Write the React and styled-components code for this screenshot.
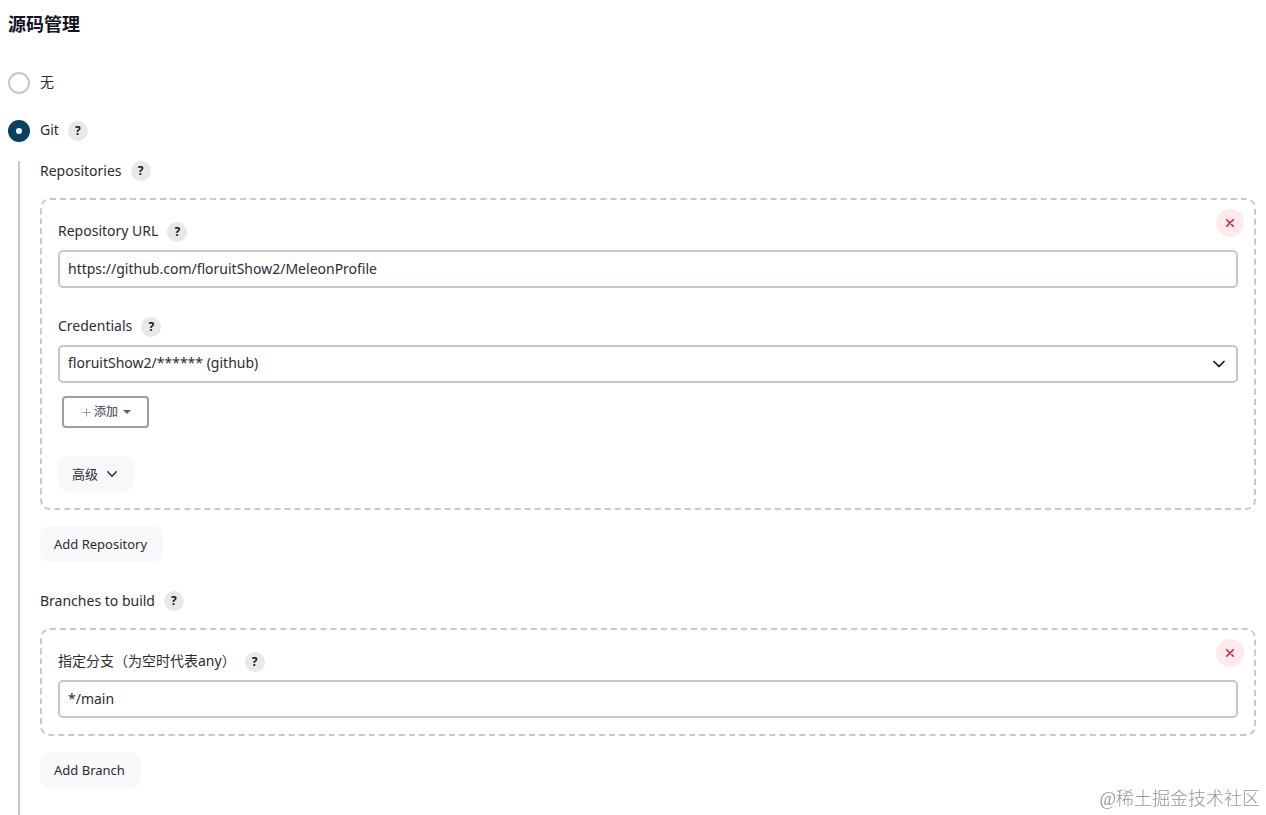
import React, { useState } from 'react';
import styled, { createGlobalStyle } from 'styled-components';

const GlobalStyle = createGlobalStyle`
  *,
  *::before,
  *::after {
    box-sizing: border-box;
  }

  body {
    margin: 0;
    background: #fff;
    color: #2c2c34;
    font-family: 'Noto Sans', 'Noto Sans CJK SC', sans-serif;
    font-size: 14px;
    line-height: 20px;
  }

  button,
  input,
  select {
    margin: 0;
    color: inherit;
    font: inherit;
  }
`;

const Page = styled.main`
  display: flex;
  flex-direction: column;
  min-height: 100vh;
  padding: 12px 10px 0 8px;
`;

const Title = styled.h1`
  margin: 0 0 36px;
  color: #14141f;
  font-size: 18px;
  font-weight: 700;
  line-height: 24px;
`;

const RadioRow = styled.div`
  display: flex;
  align-items: center;
  height: 22px;

  & + & {
    margin-top: 26px;
  }
`;

const Radio = styled.input`
  appearance: none;
  width: 22px;
  height: 22px;
  border: 2px solid #c3c8ca;
  border-radius: 50%;
  background: #fff;

  &:checked {
    border: 8px solid #0b4060;
  }
`;

const RadioLabel = styled.label`
  padding: 0 9px 2px 10px;
`;

const Nested = styled.div`
  flex: 1;
  margin: 19px 0 0 10px;
  padding: 0 0 24px 20px;
  border-left: 2px solid #c3c8ca;
`;

const LabelRow = styled.div`
  display: flex;
  align-items: center;
  gap: 9px;
  height: 20px;
`;

const Caption = styled.span`
  line-height: 20px;
`;

const FieldCaption = styled.label`
  padding-bottom: 2px;
`;

const HelpButton = styled.button`
  width: 20px;
  height: 20px;
  padding: 0;
  border: 0;
  border-radius: 50%;
  background: #e8e8e8;
  color: #14141f;
  font-size: 12px;
  font-weight: 700;
  line-height: 20px;
`;

const Panel = styled.section`
  position: relative;
  margin: 17px 0 16px;
  padding: 22px 16px 16px;
  border: 2px dashed #c6c8c9;
  border-radius: 10px;
`;

const Field = styled.div`
  & + & {
    margin-top: 29px;
  }
`;

const control = `
  display: block;
  width: 100%;
  height: 38px;
  margin-top: 8px;
  padding: 0 8px 2px;
  border: 2px solid #c3c8ca;
  border-radius: 5px;
  background: #fff;
`;

const TextInput = styled.input`
  ${control}
`;

const SelectBox = styled.div`
  position: relative;
  color: #14141f;

  svg {
    position: absolute;
    top: 12px;
    right: 12px;
    pointer-events: none;
  }
`;

const Select = styled.select`
  ${control}
  appearance: none;
  color: #2c2c34;
`;

const RemoveButton = styled.button`
  position: absolute;
  top: 9px;
  right: 10px;
  display: flex;
  align-items: center;
  justify-content: center;
  width: 28px;
  height: 28px;
  padding: 0;
  border: 0;
  border-radius: 50%;
  background: #fdeaec;
  color: #d0103a;
`;

const AddButton = styled.button`
  display: flex;
  align-items: center;
  gap: 3px;
  height: 32px;
  margin: 13px 0 28px 4px;
  padding: 0 14px 0 18px;
  border: 2px solid #9a9fa3;
  border-radius: 4px;
  background: #fff;
  color: #5c6068;
  font-size: 12px;
  font-weight: 500;
`;

const SoftButton = styled.button`
  display: flex;
  align-items: center;
  gap: 8px;
  height: 36px;
  padding: 0 16px 0 14px;
  border: 0;
  border-radius: 10px;
  background: #f8f8fa;
  font-size: 13px;
`;

const Group = styled.div`
  & + & {
    margin-top: 29px;
  }
`;

const Watermark = styled.div`
  position: fixed;
  right: 6px;
  bottom: 4px;
  color: #949494;
  font-family: 'Liberation Serif', 'Noto Sans CJK SC', serif;
  font-size: 18px;
  font-weight: 300;
  line-height: 24px;
`;

function Chevron({ size }) {
  return (
    <svg width={size} height={size} viewBox="0 0 14 14" fill="none" aria-hidden="true">
      <path
        d="M2 4.5 7 9.5 12 4.5"
        stroke="currentColor"
        strokeWidth="1.7"
        strokeLinecap="round"
        strokeLinejoin="round"
      />
    </svg>
  );
}

function Help({ topic }) {
  return (
    <HelpButton type="button" aria-label={`Help: ${topic}`}>
      ?
    </HelpButton>
  );
}

function Remove() {
  return (
    <RemoveButton type="button" aria-label="Remove">
      <svg width="8" height="8" viewBox="0 0 8 8" aria-hidden="true">
        <path
          d="M0.7 0.7 7.3 7.3M7.3 0.7 0.7 7.3"
          stroke="currentColor"
          strokeWidth="1.4"
          strokeLinecap="round"
        />
      </svg>
    </RemoveButton>
  );
}

function FieldLabel({ id, text }) {
  return (
    <LabelRow>
      <FieldCaption htmlFor={id}>{text}</FieldCaption>
      <Help topic={text} />
    </LabelRow>
  );
}

function App() {
  const [scm, setScm] = useState('git');
  const [url, setUrl] = useState('https://github.com/floruitShow2/MeleonProfile');
  const [branch, setBranch] = useState('*/main');

  return (
    <>
      <GlobalStyle />
      <Page>
        <Title>源码管理</Title>
        <RadioRow>
          <Radio
            type="radio"
            id="scm-none"
            name="scm"
            checked={scm === 'none'}
            onChange={() => setScm('none')}
          />
          <RadioLabel htmlFor="scm-none">无</RadioLabel>
        </RadioRow>
        <RadioRow>
          <Radio
            type="radio"
            id="scm-git"
            name="scm"
            checked={scm === 'git'}
            onChange={() => setScm('git')}
          />
          <RadioLabel htmlFor="scm-git">Git</RadioLabel>
          <Help topic="Git" />
        </RadioRow>
        <Nested>
          <Group>
            <LabelRow>
              <Caption>Repositories</Caption>
              <Help topic="Repositories" />
            </LabelRow>
            <Panel>
              <Remove />
              <Field>
                <FieldLabel id="repo-url" text="Repository URL" />
                <TextInput
                  id="repo-url"
                  type="text"
                  value={url}
                  onChange={(e) => setUrl(e.target.value)}
                />
              </Field>
              <Field>
                <FieldLabel id="credentials" text="Credentials" />
                <SelectBox>
                  <Select id="credentials">
                    <option>floruitShow2/****** (github)</option>
                  </Select>
                  <Chevron size={14} />
                </SelectBox>
              </Field>
              <AddButton type="button">
                <svg width="9" height="9" viewBox="0 0 9 9" aria-hidden="true">
                  <path d="M4.5 0.5V8.5M0.5 4.5H8.5" stroke="#9a9fa3" />
                </svg>
                添加
                <svg width="12" height="4" viewBox="0 0 12 4" aria-hidden="true">
                  <path d="M2 0H10L6 4Z" fill="currentColor" />
                </svg>
              </AddButton>
              <SoftButton type="button">
                高级
                <Chevron size={12} />
              </SoftButton>
            </Panel>
            <SoftButton type="button">Add Repository</SoftButton>
          </Group>
          <Group>
            <LabelRow>
              <Caption>Branches to build</Caption>
              <Help topic="Branches to build" />
            </LabelRow>
            <Panel>
              <Remove />
              <Field>
                <FieldLabel id="branch" text="指定分支（为空时代表any）" />
                <TextInput
                  id="branch"
                  type="text"
                  value={branch}
                  onChange={(e) => setBranch(e.target.value)}
                />
              </Field>
            </Panel>
            <SoftButton type="button">Add Branch</SoftButton>
          </Group>
        </Nested>
      </Page>
      <Watermark>@稀土掘金技术社区</Watermark>
    </>
  );
}

export default App;
